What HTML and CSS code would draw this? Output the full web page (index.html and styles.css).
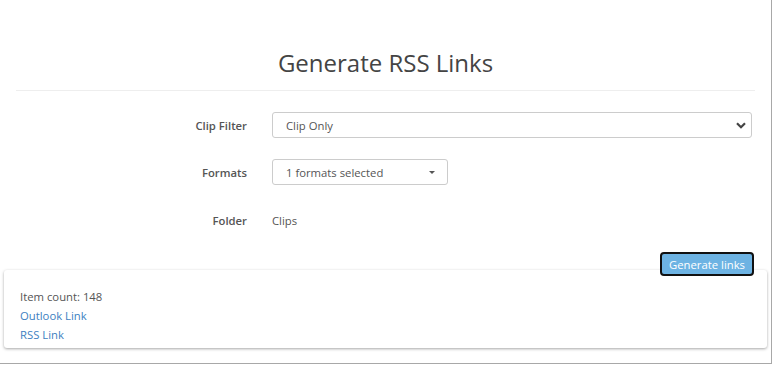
FILE: index.html
```html
<!DOCTYPE html>
<html lang="en">
<head>
    <meta charset="UTF-8">
    <meta name="viewport" content="width=device-width, initial-scale=1.0">
    <title>Generate RSS Links</title>
    <link rel="stylesheet" href="styles.css">
</head>
<body>

<div class="frame">
    <div class="panel">
        <h1>Generate RSS Links</h1>

        <div class="form">
            <div class="form-row">
                <label class="form-label">Clip Filter</label>
                <div class="select-box wide">
                    <span>Clip Only</span>
                    <svg class="chevron" width="10" height="7" viewBox="0 0 10 7">
                        <path d="M1 1.2 L5 5.2 L9 1.2" fill="none" stroke="#444" stroke-width="2.2"/>
                    </svg>
                </div>
            </div>

            <div class="form-row">
                <label class="form-label">Formats</label>
                <div class="select-box narrow">
                    <span>1 formats selected</span>
                    <span class="caret"></span>
                </div>
            </div>

            <div class="form-row static">
                <label class="form-label">Folder</label>
                <div class="form-value">Clips</div>
            </div>
        </div>

        <div class="actions">
            <button class="btn-generate">Generate links</button>
        </div>
    </div>

    <div class="results">
        <div>Item count: 148</div>
        <a href="#">Outlook Link</a>
        <a href="#">RSS Link</a>
    </div>
</div>

</body>
</html>
```

FILE: styles.css
```css
body {
    font-family: 'Open Sans', sans-serif;
    background-color: #fff;
    margin: 0;
    padding: 0;
    color: #555;
    font-size: 11.3px;
}

.frame {
    box-sizing: border-box;
    width: 772px;
    height: 364px;
    border-right: 1px solid #a8a8a8;
    border-bottom: 1px solid #a8a8a8;
}

.panel {
    padding: 0 16px;
}

h1 {
    margin: 0;
    padding: 46px 0 11px;
    font-size: 24px;
    line-height: 33px;
    font-weight: 400;
    color: #444;
    text-align: center;
    border-bottom: 1px solid #eee;
}

.form {
    margin-top: 21px;
}

.form-row {
    display: grid;
    grid-template-columns: 231px 1fr;
    column-gap: 25px;
    align-items: center;
    height: 26px;
    margin-bottom: 21px;
}

.form-row.static {
    margin-top: 22px;
    margin-bottom: 0;
}

.form-label {
    text-align: right;
    font-weight: 600;
    color: #555;
}

.select-box {
    box-sizing: border-box;
    height: 26px;
    display: flex;
    align-items: center;
    justify-content: space-between;
    padding: 0 12px 0 13px;
    border: 1px solid #ccc;
    border-radius: 3px;
    color: #555;
}

.select-box.wide {
    width: 480px;
    padding-right: 5px;
}

.select-box.narrow {
    width: 176px;
}

.caret {
    width: 0;
    height: 0;
    border-left: 3px solid transparent;
    border-right: 3px solid transparent;
    border-top: 3px solid #555;
}

.form-value {
    color: #555;
}

.actions {
    display: flex;
    justify-content: flex-end;
    margin-top: 19px;
    padding-right: 1px;
}

.btn-generate {
    position: relative;
    z-index: 1;
    height: 24px;
    padding: 0 7px;
    background-color: #6db3e3;
    color: #fff;
    border: 2px solid #111;
    border-radius: 4px;
    font-family: 'Open Sans', sans-serif;
    font-size: 11.3px;
    cursor: pointer;
}

.results {
    width: 763px;
    box-sizing: border-box;
    margin: -6px 0 0 4px;
    padding: 17px 16px 4px;
    background-color: #fff;
    border-radius: 3px;
    box-shadow: 0 1px 3px rgba(0, 0, 0, 0.35);
    line-height: 19px;
}

.results a {
    display: block;
    color: #3d7fc1;
    text-decoration: none;
}
```
